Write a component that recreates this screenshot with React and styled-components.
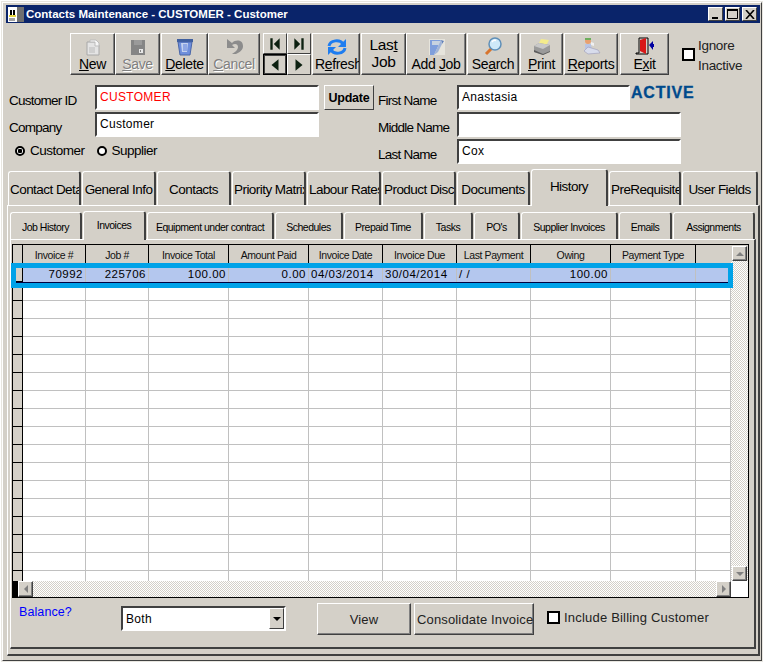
import styled, { createGlobalStyle } from 'styled-components';

const GRAY = '#d4d0c8';
const DARK = '#404040';
const DITHER = `repeating-conic-gradient(#ffffff 0 25%, ${GRAY} 0 50%) 0 0 / 2px 2px`;
const GRID_COLUMNS = '10px 63px 63px 80px 80px 74px 74px 74px 80px 85px 35px';

const GlobalStyle = createGlobalStyle`
	html, body {
		margin: 0;
		background: #ffffff;
	}
	* {
		box-sizing: border-box;
	}
	#root {
		font-family: "Liberation Sans", Arial, sans-serif;
		color: #000000;
	}
	u {
		text-underline-offset: 1px;
	}
`;

const Window = styled.div`
	width: 760px;
	height: 659px;
	margin: 2px;
	padding: 2px 1px 0 3px;
	display: flex;
	flex-direction: column;
	background: ${GRAY};
	border-left: 1px solid #ffffff;
	border-top: 1px solid #ffffff;
	border-right: 1px solid ${DARK};
	border-bottom: 1px solid ${DARK};
	outline: 1px solid #e8e6e0;
`;

const TitleBar = styled.div`
	height: 18px;
	flex: none;
	display: flex;
	align-items: center;
	padding: 0 3px 0 2px;
	background: #0a246a;
	color: #ffffff;
`;

const TitleText = styled.span`
	margin-left: 2px;
	font-size: 11.5px;
	font-weight: 700;
	flex: 1;
`;

const WinButton = styled.span`
	width: 15px;
	height: 14px;
	margin-left: 2px;
	display: flex;
	align-items: center;
	justify-content: center;
	background: ${GRAY};
	border: 1px solid;
	border-color: #ffffff ${DARK} ${DARK} #ffffff;
	color: #000000;
`;

const Toolbar = styled.div`
	display: flex;
	height: 42px;
	flex: none;
	margin: 10px 0 0 64px;
`;

const ToolButton = styled.div`
	width: ${(p) => p.$w}px;
	margin-left: ${(p) => p.$gap || 0}px;
	height: 42px;
	flex: none;
	display: flex;
	flex-direction: column;
	align-items: ${(p) => (p.$clip ? 'flex-start' : 'center')};
	justify-content: ${(p) => (p.$textOnly ? 'center' : 'flex-end')};
	padding: 0 0 2px ${(p) => (p.$clip ? 2 : 0)}px;
	overflow: hidden;
	white-space: nowrap;
	background: ${GRAY};
	border: 1px solid;
	border-color: #ffffff ${DARK} ${DARK} #ffffff;
	box-shadow: inset -1px -1px 0 #808080;
	font-size: ${(p) => (p.$textOnly ? 15.5 : 14)}px;
	line-height: ${(p) => (p.$textOnly ? 17 : 16)}px;
	letter-spacing: -0.35px;
	text-align: center;
	color: ${(p) => (p.$disabled ? '#808080' : '#000000')};
	text-shadow: ${(p) => (p.$disabled ? '1px 1px 0 #ffffff' : 'none')};

	svg {
		flex: none;
		display: block;
		align-self: center;
	}
`;

const NavPad = styled.div`
	width: 48px;
	height: 42px;
	margin-left: 3px;
	display: grid;
	grid-template-columns: 24px 24px;
	grid-template-rows: 21px 21px;
`;

const NavButton = styled.div`
	display: flex;
	align-items: center;
	justify-content: center;
	background: ${GRAY};
	border: 1px solid;
	border-color: ${(p) => (p.$focus ? '#000000' : `#ffffff ${DARK} ${DARK} #ffffff`)};
	box-shadow: ${(p) => (p.$focus ? `inset 0 0 0 1px ${DARK}` : 'none')};
`;

const IgnoreBox = styled.div`
	display: flex;
	align-items: center;
	margin-left: 13px;
	gap: 3px;
	font-size: 13.5px;
	line-height: 20px;
	letter-spacing: -0.3px;
	color: #222222;
`;

const IgnoreText = styled.div`
	padding-top: 3px;
`;

const Check = styled.span`
	display: block;
	flex: none;
	width: 13px;
	height: 13px;
	background: #ffffff;
	border: 2px solid #000000;
`;

const FormGrid = styled.div`
	display: grid;
	grid-template-columns: 86px 224px 55px 83px 1fr;
	grid-auto-rows: 25px;
	row-gap: 2px;
	flex: none;
	margin: 10px 0 0 3px;
`;

const Label = styled.label`
	font-size: 13.5px;
	letter-spacing: -0.75px;
	line-height: 32px;
	white-space: nowrap;
	padding-left: ${(p) => p.$pad || 0}px;
`;

const TextBox = styled.div`
	width: ${(p) => p.$w || 224}px;
	height: 25px;
	padding: 3px 3px 0;
	flex: none;
	background: #ffffff;
	border: 2px solid;
	border-color: ${DARK} #ffffff #ffffff ${DARK};
	font-size: 12px;
	line-height: 15px;
	letter-spacing: 0.3px;
	color: ${(p) => p.$color || '#000000'};
`;

const UpdateButton = styled.div`
	justify-self: end;
	width: 50px;
	display: flex;
	align-items: center;
	justify-content: center;
	background: ${GRAY};
	border: 1px solid;
	border-color: #ffffff ${DARK} ${DARK} #ffffff;
	font-size: 12.5px;
	font-weight: 700;
	letter-spacing: -0.2px;
`;

const NameCell = styled.div`
	display: flex;
	align-items: flex-start;
`;

const ActiveText = styled.span`
	margin-left: 1px;
	font-size: 16px;
	line-height: 16px;
	font-weight: 700;
	letter-spacing: 0.8px;
	color: #004a8c;
	-webkit-text-stroke: 0.3px #004a8c;
`;

const RadioRow = styled.div`
	grid-column: 1 / 3;
	display: flex;
	align-items: center;
	padding: 0 0 2px 6px;
	font-size: 13.5px;
	letter-spacing: -0.5px;
`;

const Radio = styled.span`
	width: 10px;
	height: 10px;
	margin: 0 5px 0 ${(p) => p.$gap || 0}px;
	flex: none;
	border: 2px solid #000000;
	border-radius: 50%;
	background: ${(p) => (p.$on ? 'radial-gradient(circle, #000000 0 2px, #ffffff 2.5px)' : '#ffffff')};
`;

const TabRow = styled.div`
	display: flex;
	align-items: flex-end;
	gap: 1px;
	flex: none;
	height: ${(p) => (p.$inner ? 29 : 36)}px;
	margin: ${(p) => (p.$inner ? 0 : '5px 0 0 2px')};
`;

const Tab = styled.div`
	width: ${(p) => p.$w}px;
	flex: none;
	height: ${(p) => {
		if (p.$inner) return p.$active ? 29 : 27;
		return p.$active ? 37 : 34;
	}}px;
	margin-bottom: ${(p) => (p.$active ? -1 : 0)}px;
	padding: ${(p) => (p.$active ? '0 1px 3px' : '2px 1px 0')};
	display: flex;
	align-items: center;
	justify-content: ${(p) => (p.$clip ? 'flex-start' : 'center')};
	overflow: hidden;
	white-space: nowrap;
	background: ${GRAY};
	border-top: 1px solid #ffffff;
	border-left: 1px solid #ffffff;
	border-right: 2px solid ${DARK};
	border-radius: 3px 3px 0 0;
	font-size: ${(p) => (p.$inner ? 10.5 : 13.5)}px;
	letter-spacing: ${(p) => (p.$inner ? -0.5 : -0.55)}px;
	position: relative;
`;

const OuterPanel = styled.div`
	flex: 1;
	min-height: 0;
	margin: 0 0 4px 1px;
	padding: 4px 2px 5px 2px;
	display: flex;
	flex-direction: column;
	border-top: 1px solid #ffffff;
	border-left: 1px solid #ffffff;
	border-right: 2px solid ${DARK};
	border-bottom: 2px solid ${DARK};
`;

const InnerPanel = styled.div`
	flex: 1;
	min-height: 0;
	padding: 4px 5px 0 1px;
	display: flex;
	flex-direction: column;
	border-top: 1px solid #ffffff;
	border-left: 1px solid #ffffff;
	border-right: 2px solid ${DARK};
	border-bottom: 2px solid ${DARK};
`;

const GridFrame = styled.div`
	width: 737px;
	height: 354px;
	flex: none;
	display: grid;
	grid-template-columns: 718px 17px;
	grid-template-rows: 336px 16px;
	background: #ffffff;
	border: 1px solid #000000;
`;

const GridArea = styled.div`
	display: flex;
	flex-direction: column;
	min-height: 0;
`;

const Row = styled.div`
	display: grid;
	grid-template-columns: ${GRID_COLUMNS};
	height: ${(p) => (p.$head ? 20 : 18)}px;
	flex: none;
	position: relative;
	background: ${(p) => (p.$selected ? '#b4c7ee' : 'transparent')};
	border-bottom: ${(p) => (p.$selected ? '1px solid #000040' : 'none')};

	&::after {
		content: ${(p) => (p.$selected ? '""' : 'none')};
		position: absolute;
		z-index: 2;
		left: -2px;
		right: -2px;
		top: -2px;
		bottom: -6px;
		border: 5px solid #00a2e8;
	}
`;

const Gutter = styled.div`
	background: ${GRAY};
	border-right: 1px solid #000000;
	border-bottom: 1px solid #000000;
`;

const HeadCell = styled.div`
	background: ${GRAY};
	border-right: ${(p) => (p.$last ? 'none' : '1px solid #000000')};
	font-size: 10.5px;
	letter-spacing: -0.4px;
	line-height: 21px;
	text-align: center;
	white-space: nowrap;
	overflow: hidden;
	color: #111111;
`;

const Cell = styled.div`
	border-right: 1px solid #c0c0c0;
	border-bottom: ${(p) => (p.$selected ? 'none' : '1px solid #c0c0c0')};
	padding: 0 ${(p) => (p.$left ? 0 : 2)}px 0 ${(p) => (p.$left ? 2 : 0)}px;
	font-size: 11.5px;
	letter-spacing: 0.5px;
	line-height: 19px;
	text-align: ${(p) => (p.$left ? 'left' : 'right')};
	white-space: nowrap;
	overflow: hidden;
`;

const EmptyRows = styled.div`
	flex: 1;
	min-height: 0;
	overflow: hidden;
`;

const VScroll = styled.div`
	display: flex;
	flex-direction: column;
	justify-content: space-between;
	padding-left: 1px;
	background: ${DITHER};
`;

const VScrollTop = styled.div`
	height: 16px;
	margin-left: -1px;
	padding: 1px 0 0 1px;
	background: ${GRAY};
`;

const ScrollButton = styled.div`
	width: 15px;
	height: ${(p) => (p.$wide ? 16 : 15)}px;
	flex: none;
	display: flex;
	align-items: center;
	justify-content: center;
	background: ${GRAY};
	border: 1px solid;
	border-color: #ffffff ${DARK} ${DARK} #ffffff;
	box-shadow: inset -1px -1px 0 #808080;
`;

const Arrow = styled.span`
	width: 0;
	height: 0;
	display: block;
	border-style: solid;
	border-color: transparent;
	border-width: 4px;
	${(p) => p.$dir === 'up' && `border-top-width: 0; border-bottom-color: ${p.$color};`}
	${(p) => p.$dir === 'down' && `border-bottom-width: 0; border-top-color: ${p.$color};`}
	${(p) => p.$dir === 'left' && `border-left-width: 0; border-right-color: ${p.$color};`}
	${(p) => p.$dir === 'right' && `border-right-width: 0; border-left-color: ${p.$color};`}
`;

const HScroll = styled.div`
	display: flex;
	justify-content: space-between;
	background: ${DITHER};
`;

const HScrollStart = styled.div`
	display: flex;
`;

const BlackSquare = styled.span`
	width: 5px;
	height: 16px;
	background: #000000;
`;

const Corner = styled.div`
	background: #ffffff;
`;

const Footer = styled.div`
	display: flex;
	align-items: flex-start;
	flex: none;
	margin-top: 5px;
	padding-left: 7px;
`;

const BalanceLink = styled.span`
	width: 102px;
	flex: none;
	font-size: 12.5px;
	line-height: 19px;
	letter-spacing: 0.1px;
	color: #0000ff;
`;

const SelectBox = styled.div`
	width: 165px;
	height: 25px;
	flex: none;
	margin-top: 3px;
	display: flex;
	align-items: center;
	justify-content: space-between;
	padding: 0 0 0 3px;
	background: #ffffff;
	border: 2px solid;
	border-color: ${DARK} #ffffff #ffffff ${DARK};
	font-size: 12px;
	letter-spacing: 0.3px;
`;

const SelectArrow = styled.span`
	width: 15px;
	height: 21px;
	display: flex;
	align-items: center;
	justify-content: center;
	background: ${GRAY};
	border: 1px solid;
	border-color: #ffffff ${DARK} ${DARK} #ffffff;
`;

const FooterButton = styled.div`
	width: ${(p) => p.$w}px;
	height: 32px;
	margin-left: ${(p) => p.$gap}px;
	flex: none;
	display: flex;
	align-items: center;
	justify-content: ${(p) => (p.$clip ? 'flex-start' : 'center')};
	padding-left: ${(p) => (p.$clip ? 2 : 0)}px;
	overflow: hidden;
	white-space: nowrap;
	background: ${GRAY};
	border: 1px solid;
	border-color: #ffffff ${DARK} ${DARK} #ffffff;
	box-shadow: inset -1px -1px 0 #808080;
	font-size: 13px;
	letter-spacing: 0.15px;
	color: #222222;
`;

const BillingCheck = styled.div`
	display: flex;
	align-items: center;
	gap: 4px;
	margin: 7px 0 0 13px;
	font-size: 13px;
	letter-spacing: 0.2px;
	color: #222222;
`;

/* toolbar drawings */
const IconNew = () => (
	<svg width="18" height="19" viewBox="0 0 18 19">
		<path d="M3 5h8l4 3v10H3z" fill="#e4e4e4" stroke="#a8a8a8" />
		<path d="M6 3h6l3 3v3h-4V5H6z" fill="#f6f6f6" stroke="#bdbdbd" />
		<path d="M5 10h6v6H5z" fill="#cfcfcf" />
	</svg>
);

const IconSave = () => (
	<svg width="18" height="19" viewBox="0 0 18 19">
		<path d="M2 3h14v15H2z" fill="#858585" />
		<path d="M5 3h8v5H5z" fill="#9a9a9a" />
		<path d="M10 12h4v4h-4z" fill="#e8e8e8" />
		<path d="M11 13h1v2h-1z" fill="#858585" />
	</svg>
);

const IconTrash = () => (
	<svg width="18" height="19" viewBox="0 0 18 19">
		<path d="M1 2h16v3H1z" fill="#3f5f9f" />
		<path d="M2 5h14l-2 13H4z" fill="#6f8fdc" stroke="#4a66a8" />
		<path d="M5 6h7l-1 9H6z" fill="#c4d2ee" />
		<path d="M7 7h4v7H7z" fill="#8fa7e4" />
	</svg>
);

const IconUndo = () => (
	<svg width="20" height="19" viewBox="0 0 20 19">
		<path d="M3 2v9h8L8 8c3-2 6-1 6 2 0 3-3 5-6 7h4c4-2 7-4 7-8 0-6-7-7-11-3L3 2z" fill="#8c8c8c" />
	</svg>
);

const IconRefresh = () => (
	<svg width="22" height="18" viewBox="0 0 22 18" fill="none">
		<path d="M3 8c1-6 11-7 14-2" stroke="#1e7df0" strokeWidth="3" />
		<path d="M20 1v8h-8z" fill="#1e7df0" />
		<path d="M19 10c-1 6-11 7-14 2" stroke="#1e7df0" strokeWidth="3" />
		<path d="M2 17V9h8z" fill="#1e7df0" />
	</svg>
);

const IconAddJob = () => (
	<svg width="20" height="19" viewBox="0 0 20 19">
		<path d="M3 2h16v16H3z" fill="#e6e4dc" />
		<path d="M4 3h11L8 18H4z" fill="#7f9fdc" />
		<path d="M6 4h9l-2 4H6z" fill="#c8d3e0" />
		<path d="M15 3l3 1-2 3z" fill="#5f7fb8" />
		<path d="M8 18l7-15 1 4-4 8z" fill="#a0b4d8" />
	</svg>
);

const IconSearch = () => (
	<svg width="20" height="19" viewBox="0 0 20 19" fill="none">
		<path d="M9 11l-6 6" stroke="#d8742c" strokeWidth="3" />
		<circle cx="12" cy="7" r="6" fill="#cfe9f8" stroke="#5f8fb8" strokeWidth="1.5" />
		<path d="M9 5c1-1.500 3-2 4-1.500" stroke="#ffffff" strokeWidth="1.500" />
	</svg>
);

const IconPrint = () => (
	<svg width="20" height="18" viewBox="0 0 20 18">
		<path d="M9 1l8 1-3 6-8-1z" fill="#f4ec8c" />
		<path d="M2 8l5-3 11 2v6l-7 4-9-3z" fill="#9a9a9a" />
		<path d="M2 8l9 3 7-4-11-2z" fill="#c8c8c8" />
		<path d="M2 12l9 4 7-3v1l-7 3-9-3z" fill="#5c5c5c" />
	</svg>
);

const IconReports = () => (
	<svg width="20" height="19" viewBox="0 0 20 19">
		<circle cx="7" cy="4" r="3" fill="#e8a070" />
		<path d="M4 1h6v2H4z" fill="#6cae5c" />
		<path d="M4 7h6l1 7H4z" fill="#b8c4e4" />
		<path d="M7 10l10 3 2 3-12 1-4-3z" fill="#d8dcec" stroke="#9a9ab8" strokeWidth="0.6" />
		<path d="M10 5l3 1v3l-3-1z" fill="#f0f0f0" />
	</svg>
);

const IconExit = () => (
	<svg width="20" height="19" viewBox="0 0 20 19">
		<path d="M4 1h9v16H1v-1h3z" fill="none" stroke="#000000" />
		<path d="M5 3l6-2v16l-6-3z" fill="#d81818" />
		<path d="M14 8l4-4v3h1v3h-1v3z" fill="#0000a0" />
	</svg>
);

const NavGlyph = ({ d }) => (
	<svg width="14" height="14" viewBox="0 0 12 12">
		<path d={d} fill="#0c2010" />
	</svg>
);

const tools = [
	{ w: 45, icon: <IconNew />, label: <><u>N</u>ew</> },
	{ w: 45, icon: <IconSave />, label: <><u>S</u>ave</>, disabled: true },
	{ w: 47, gap: 1, icon: <IconTrash />, label: <><u>D</u>elete</> },
	{ w: 52, icon: <IconUndo />, label: <><u>C</u>ancel</>, disabled: true },
];

const tools2 = [
	{ w: 60, icon: <IconAddJob />, label: <>Add <u>J</u>ob</> },
	{ w: 52, gap: 1, icon: <IconSearch />, label: <>Se<u>a</u>rch</> },
	{ w: 43, gap: 1, icon: <IconPrint />, label: <><u>P</u>rint</> },
	{ w: 54, gap: 1, icon: <IconReports />, label: <><u>R</u>eports</> },
	{ w: 49, gap: 2, icon: <IconExit />, label: <>E<u>x</u>it</> },
];

const outerTabs = [
	{ w: 73, text: 'Contact Details', clip: true },
	{ w: 74, text: 'General Info' },
	{ w: 74, text: 'Contacts' },
	{ w: 74, text: 'Priority Matrix', clip: true },
	{ w: 74, text: 'Labour Rates', clip: true },
	{ w: 74, text: 'Product Discounts', clip: true },
	{ w: 73, text: 'Documents' },
	{ w: 77, text: 'History', active: true },
	{ w: 72, text: 'PreRequisites', clip: true },
	{ w: 76, text: 'User Fields' },
];

const innerTabs = [
	{ w: 72, text: 'Job History' },
	{ w: 63, text: 'Invoices', active: true },
	{ w: 127, text: 'Equipment under contract' },
	{ w: 68, text: 'Schedules' },
	{ w: 79, text: 'Prepaid Time' },
	{ w: 49, text: 'Tasks' },
	{ w: 46, text: "PO's" },
	{ w: 97, text: 'Supplier Invoices' },
	{ w: 53, text: 'Emails' },
	{ w: 82, text: 'Assignments' },
];

const columns = [
	{ title: 'Invoice #', value: '70992' },
	{ title: 'Job #', value: '225706' },
	{ title: 'Invoice Total', value: '100.00' },
	{ title: 'Amount Paid', value: '0.00' },
	{ title: 'Invoice Date', value: '04/03/2014', left: true },
	{ title: 'Invoice Due', value: '30/04/2014', left: true },
	{ title: 'Last Payment', value: '/ /', left: true },
	{ title: 'Owing', value: '100.00' },
	{ title: 'Payment Type', value: '' },
	{ title: '', value: '' },
];

const emptyRows = Array.from({ length: 17 }, (_, n) => n);

const App = () => {
	return (
		<Window>
			<GlobalStyle />
			<TitleBar>
				<svg width="16" height="16" viewBox="0 0 16 16">
					<path d="M0 1h16v15H0z" fill="#ffffff" />
					<path d="M9 1h7v15H9z" fill="#707070" />
					<path d="M2 4h2v5H2zM5 4h2v5H5z" fill="#000000" />
					<path d="M1 9h7v2H1z" fill="#e8d840" />
					<path d="M1 12h6v3H1z" fill="#a0a0a0" />
				</svg>
				<TitleText>Contacts Maintenance - CUSTOMER - Customer</TitleText>
				<WinButton>
					<svg width="9" height="9" viewBox="0 0 9 9"><path d="M1 7h6v2H1z" fill="#000000" /></svg>
				</WinButton>
				<WinButton>
					<svg width="11" height="10" viewBox="0 0 11 10"><path d="M.5 1.500h10v8H.5z" fill="none" stroke="#000000" /><path d="M0 0h11v2H0z" fill="#000000" /></svg>
				</WinButton>
				<WinButton>
					<svg width="10" height="9" viewBox="0 0 10 9"><path d="M1 0l8 9M9 0l-8 9" stroke="#000000" strokeWidth="1.6" /></svg>
				</WinButton>
			</TitleBar>

			<Toolbar>
				{tools.map((t, n) => (
					<ToolButton key={`tool${n}`} $w={t.w} $gap={t.gap} $disabled={t.disabled}>
						{t.icon}
						<span>{t.label}</span>
					</ToolButton>
				))}
				<NavPad>
					<NavButton><NavGlyph d="M2 1h2v10H2zM10 1v10L5 6z" /></NavButton>
					<NavButton><NavGlyph d="M2 1l5 5-5 5zM8 1h2v10H8z" /></NavButton>
					<NavButton $focus><NavGlyph d="M9 1v10L3 6z" /></NavButton>
					<NavButton><NavGlyph d="M3 1l6 5-6 5z" /></NavButton>
				</NavPad>
				<ToolButton $w={48} $gap={1} $clip>
					<IconRefresh />
					<span>R<u>e</u>fresh</span>
				</ToolButton>
				<ToolButton $w={45} $gap={1} $textOnly>
					<span>Las<u>t</u></span>
					<span>Job</span>
				</ToolButton>
				{tools2.map((t, n) => (
					<ToolButton key={`toolb${n}`} $w={t.w} $gap={t.gap}>
						{t.icon}
						<span>{t.label}</span>
					</ToolButton>
				))}
				<IgnoreBox>
					<Check />
					<IgnoreText>Ignore<br />Inactive</IgnoreText>
				</IgnoreBox>
			</Toolbar>

			<FormGrid>
				<Label>Customer ID</Label>
				<TextBox $color="#ff0000">CUSTOMER</TextBox>
				<UpdateButton>Update</UpdateButton>
				<Label $pad={4}>First Name</Label>
				<NameCell>
					<TextBox $w={173}>Anastasia</TextBox>
					<ActiveText>ACTIVE</ActiveText>
				</NameCell>

				<Label>Company</Label>
				<TextBox>Customer</TextBox>
				<span />
				<Label $pad={4}>Middle Name</Label>
				<TextBox />

				<RadioRow>
					<Radio $on />Customer
					<Radio $gap={12} />Supplier
				</RadioRow>
				<span />
				<Label $pad={4}>Last Name</Label>
				<TextBox>Cox</TextBox>
			</FormGrid>

			<TabRow>
				{outerTabs.map((t) => (
					<Tab key={t.text} $w={t.w} $active={t.active} $clip={t.clip}>{t.text}</Tab>
				))}
			</TabRow>

			<OuterPanel>
				<TabRow $inner>
					{innerTabs.map((t) => (
						<Tab key={t.text} $inner $w={t.w} $active={t.active}>{t.text}</Tab>
					))}
				</TabRow>

				<InnerPanel>
					<GridFrame>
						<GridArea>
							<Row $head>
								<Gutter />
								{columns.map((c, n) => (
									<HeadCell key={`head${n}`} $last={n === columns.length - 1}>{c.title}</HeadCell>
								))}
							</Row>
							<Row $selected>
								<Gutter />
								{columns.map((c, n) => (
									<Cell key={`cell${n}`} $selected $left={c.left}>{c.value}</Cell>
								))}
							</Row>
							<EmptyRows>
								{emptyRows.map((r) => (
									<Row key={`row${r}`}>
										<Gutter />
										{columns.map((c, n) => <Cell key={`e${n}`} />)}
									</Row>
								))}
							</EmptyRows>
						</GridArea>
						<VScroll>
							<VScrollTop>
								<ScrollButton><Arrow $dir="up" $color="#808080" /></ScrollButton>
							</VScrollTop>
							<ScrollButton><Arrow $dir="down" $color="#808080" /></ScrollButton>
						</VScroll>
						<HScroll>
							<HScrollStart>
								<BlackSquare />
								<ScrollButton $wide><Arrow $dir="left" $color="#808080" /></ScrollButton>
							</HScrollStart>
							<ScrollButton $wide><Arrow $dir="right" $color="#808080" /></ScrollButton>
						</HScroll>
						<Corner />
					</GridFrame>

					<Footer>
						<BalanceLink>Balance?</BalanceLink>
						<SelectBox>
							Both
							<SelectArrow><Arrow $dir="down" $color="#000000" /></SelectArrow>
						</SelectBox>
						<FooterButton $w={94} $gap={31}>View</FooterButton>
						<FooterButton $w={120} $gap={3} $clip>Consolidate Invoices</FooterButton>
						<BillingCheck>
							<Check />
							Include Billing Customer
						</BillingCheck>
					</Footer>
				</InnerPanel>
			</OuterPanel>
		</Window>
	);
};

export default App;
